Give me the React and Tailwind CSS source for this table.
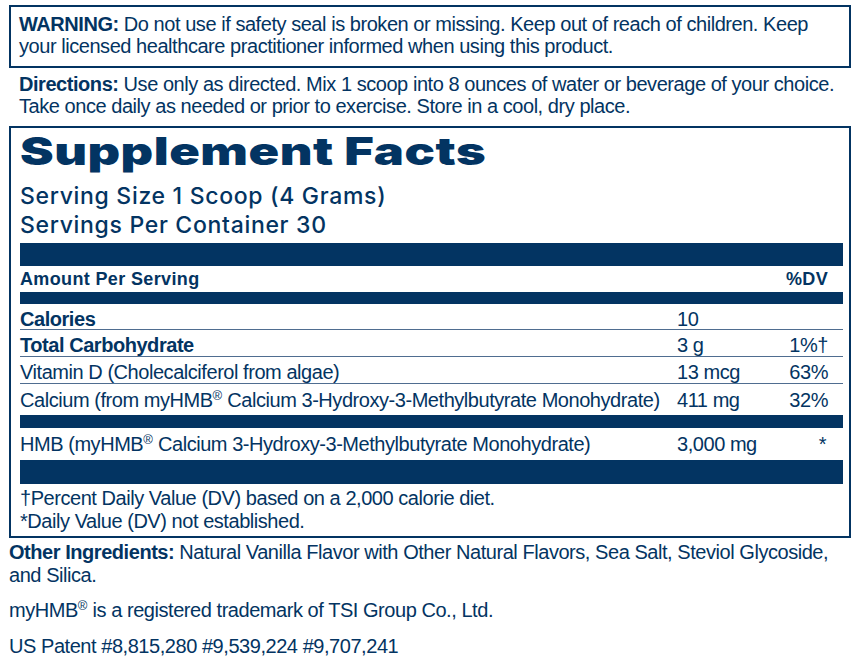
import React from "react";

const navy = "text-[#033462]";

function Reg() {
  return <span className="relative -top-[7px] text-[13px] tracking-normal">®</span>;
}

const rows = [
  { name: "Calories", amount: "10", dv: "", bold: true, h: "h-[26px]" },
  { name: "Total Carbohydrate", amount: "3 g", dv: "1%†", bold: true, h: "h-[27px]" },
  { name: "Vitamin D (Cholecalciferol from algae)", amount: "13 mcg", dv: "63%", h: "h-[27px]" },
];

function App() {
  return (
    <div
      className={`w-[861px] h-[667px] bg-white overflow-hidden pl-[9px] pr-[10px] pt-[5px] text-[20px] tracking-[-0.45px] ${navy}`}
      style={{ fontFamily: '"Liberation Sans", Arial, sans-serif' }}
    >
      {/* Warning */}
      <div className="border-2 border-[#033462] px-[8px] pt-[6px] pb-[9px] leading-[22px]">
        <span className="font-bold">WARNING:</span> Do not use if safety seal is broken or missing. Keep out of reach of children. Keep your licensed healthcare practitioner informed when using this product.
      </div>

      {/* Directions */}
      <div className="px-[10px] pt-[5px] leading-[22px]">
        <span className="font-bold">Directions:</span> Use only as directed. Mix 1 scoop into 8 ounces of water or beverage of your choice. Take once daily as needed or prior to exercise. Store in a cool, dry place.
      </div>

      {/* Supplement Facts */}
      <div className="mt-[9px] border-2 border-[#033462] pl-[9px] pr-[6px] pb-[3px]">
        <div className="h-[46px] pt-[1px]">
          <span
            className="inline-block origin-left scale-x-[1.33] text-[38px] leading-[44px] font-black tracking-[0.01em]"
            style={{ fontFamily: 'Inter, "DejaVu Sans", sans-serif' }}
          >
            Supplement Facts
          </span>
        </div>
        <div
          className="mt-[8px] text-[23px] leading-[29px] font-medium tracking-[0.03em]"
          style={{ fontFamily: 'Inter, "Liberation Sans", sans-serif' }}
        >
          <div>Serving Size 1 Scoop (4 Grams)</div>
          <div>Servings Per Container 30</div>
        </div>
        <div className="mt-[3px] h-[23px] bg-[#033462]" />
        <div className="h-[26px] flex items-center justify-between pr-[15px] text-[18px] font-bold tracking-[0.02em]">
          <span>Amount Per Serving</span>
          <span>%DV</span>
        </div>
        <div className="h-[12px] bg-[#033462]" />

        {rows.map((r) => (
          <div
            key={r.name}
            className={`${r.h} grid grid-cols-[657px_1fr_auto] items-center pr-[15px] border-b border-[#4f6d90]`}
          >
            <span className={r.bold ? "font-bold" : ""}>{r.name}</span>
            <span>{r.amount}</span>
            <span>{r.dv}</span>
          </div>
        ))}
        <div className="h-[31px] grid grid-cols-[657px_1fr_auto] items-center pr-[15px]">
          <span className="whitespace-nowrap">
            Calcium (from myHMB<Reg /> Calcium 3-Hydroxy-3-Methylbutyrate Monohydrate)
          </span>
          <span>411 mg</span>
          <span>32%</span>
        </div>
        <div className="h-[13px] bg-[#033462]" />
        <div className="h-[32px] grid grid-cols-[657px_1fr_auto] items-center pr-[17px]">
          <span className="whitespace-nowrap">
            HMB (myHMB<Reg /> Calcium 3-Hydroxy-3-Methylbutyrate Monohydrate)
          </span>
          <span>3,000 mg</span>
          <span>*</span>
        </div>
        <div className="h-[24px] bg-[#033462]" />
        <div className="pt-[3px] leading-[23px]">
          <div>†Percent Daily Value (DV) based on a 2,000 calorie diet.</div>
          <div>*Daily Value (DV) not established.</div>
        </div>
      </div>

      {/* Other info */}
      <div className="pt-[3px] leading-[23px]">
        <span className="font-bold">Other Ingredients:</span> Natural Vanilla Flavor with Other Natural Flavors, Sea Salt, Steviol Glycoside, and Silica.
      </div>
      <div className="mt-[12px] leading-[23px]">
        myHMB<Reg /> is a registered trademark of TSI Group Co., Ltd.
      </div>
      <div className="mt-[11px] leading-[23px]">
        US Patent #8,815,280 #9,539,224 #9,707,241
      </div>
    </div>
  );
}

export default App;
